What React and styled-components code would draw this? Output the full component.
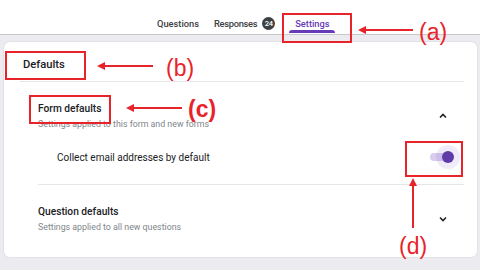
import React from "react";
import styled, { createGlobalStyle } from "styled-components";

const Global = createGlobalStyle`
	html, body {
		margin: 0;
		padding: 0;
		background: #ececf0;
		font-family: Roboto, "Liberation Sans", sans-serif;
	}
`;
const Page = styled("div")`
	position: relative;
	width: 480px;
	height: 270px;
	overflow: hidden;
`;
const TopBar = styled("div")`
	height: 35px;
	background: #fff;
	border-bottom: 1px solid #c8c8cc;
	display: flex;
	align-items: stretch;
	padding-left: 157px;
	box-sizing: border-box;
`;
const Tab = styled("div")`
	position: relative;
	display: flex;
	align-items: center;
	padding-top: 13px;
	margin-right: ${(p) => p.gap || 0}px;
	font-size: 9.3px;
	font-weight: 500;
	letter-spacing: ${(p) => p.tight || 0}px;
	color: ${(p) => (p.active ? "#673ab7" : "#3c4043")};
	&::after {
		content: "";
		display: ${(p) => (p.active ? "block" : "none")};
		position: absolute;
		left: -6px;
		right: -5px;
		bottom: 1px;
		height: 3px;
		border-radius: 3px 3px 0 0;
		background: #673ab7;
	}
`;
const Badge = styled("span")`
	display: inline-flex;
	align-items: center;
	justify-content: center;
	width: 13px;
	height: 13px;
	border-radius: 50%;
	background: #3c4043;
	color: #fff;
	font-size: 7.5px;
	letter-spacing: -0.3px;
	margin-left: 5px;
`;
const Card = styled("div")`
	margin: 7px 3px 0 4px;
	height: 215px;
	background: #fff;
	border-radius: 6px;
	box-shadow: 0 0 0 1px #e2e2e6;
`;
const CardHead = styled("div")`
	height: 40px;
	display: flex;
	align-items: center;
	margin: 0 13px 0 16px;
	padding: 6px 0 0 3px;
	font-size: 11.2px;
	font-weight: 500;
	color: #202124;
	border-bottom: 1px solid #e6e6e8;
	box-sizing: border-box;
`;
const Section = styled("div")`
	margin: 0 13px 0 34px;
	padding-top: ${(p) => p.top}px;
	border-bottom: ${(p) => (p.line ? "1px solid #e6e6e8" : "none")};
	padding-bottom: ${(p) => p.bottom || 0}px;
`;
const SectionHead = styled("div")`
	display: flex;
	align-items: center;
	justify-content: space-between;
	padding-right: 17px;
`;
const Title = styled("div")`
	font-size: 10.2px;
	line-height: 14px;
	font-weight: 500;
	color: #202124;
`;
const Sub = styled("div")`
	font-size: 8.8px;
	line-height: 12px;
	margin-top: 2px;
	color: #80868b;
`;
const Row = styled("div")`
	height: 36px;
	margin-top: 9px;
	display: flex;
	align-items: center;
	justify-content: space-between;
	padding-left: 19px;
	padding-right: 13px;
	font-size: 10px;
	color: #202124;
`;
const Switch = styled("div")`
	position: relative;
	width: 21px;
	height: 8px;
	border-radius: 4px;
	background: #d9cdef;
	&::before {
		content: "";
		position: absolute;
		right: -9px;
		top: -8px;
		width: 24px;
		height: 24px;
		border-radius: 50%;
		background: rgba(103, 58, 183, 0.1);
	}
	&::after {
		content: "";
		position: absolute;
		right: -3px;
		top: -2px;
		width: 12px;
		height: 12px;
		border-radius: 50%;
		background: #5f3ba8;
	}
`;
const Mark = styled("div")`
	position: absolute;
	border: 2px solid #e8232a;
	box-sizing: border-box;
`;
const Label = styled("div")`
	position: absolute;
	font-family: "Liberation Sans", Arial, sans-serif;
	font-size: 23px;
	line-height: 24px;
	font-weight: ${(p) => (p.bold ? 700 : 400)};
	color: #e8232a;
`;
const Arrow = styled("svg")`
	position: absolute;
	overflow: visible;
`;

function Chevron({ up }) {
	return (
		<svg width="8" height="6" viewBox="0 0 8 6">
			<path
				d={up ? "M1 4.5 L4 1.5 L7 4.5" : "M1 1.5 L4 4.5 L7 1.5"}
				fill="none"
				stroke="#202124"
				strokeWidth="1.6"
			/>
		</svg>
	);
}

function HArrow({ x1, x2, y }) {
	return (
		<Arrow style={{ left: x1, top: y - 5 }} width={x2 - x1} height="10">
			<line x1="4" y1="5" x2={x2 - x1} y2="5" stroke="#e8232a" strokeWidth="2" />
			<path d="M0 5 L8 1 L8 9 Z" fill="#e8232a" />
		</Arrow>
	);
}

export default function App() {
	return (
		<Page>
			<Global />
			<TopBar>
				<Tab gap={15}>Questions</Tab>
				<Tab gap={20} tight={-0.3}>
					Responses<Badge>24</Badge>
				</Tab>
				<Tab active>Settings</Tab>
			</TopBar>
			<Card>
				<CardHead>Defaults</CardHead>
				<Section top={20} bottom={9} line>
					<SectionHead>
						<div>
							<Title>Form defaults</Title>
							<Sub>Settings applied to this form and new forms</Sub>
						</div>
						<Chevron up />
					</SectionHead>
					<Row>
						Collect email addresses by default
						<Switch />
					</Row>
				</Section>
				<Section top={20}>
					<SectionHead>
						<div>
							<Title>Question defaults</Title>
							<Sub>Settings applied to all new questions</Sub>
						</div>
						<Chevron />
					</SectionHead>
				</Section>
			</Card>

			<Mark style={{ left: 282, top: 13, width: 70, height: 30 }} />
			<HArrow x1={358} x2={413} y={30} />
			<Label style={{ left: 419, top: 20 }}>(a)</Label>

			<Mark style={{ left: 5, top: 51, width: 81, height: 29 }} />
			<HArrow x1={97} x2={153} y={66} />
			<Label style={{ left: 166, top: 56 }}>(b)</Label>

			<Mark style={{ left: 29, top: 95, width: 82, height: 29 }} />
			<HArrow x1={126} x2={182} y={108} />
			<Label bold style={{ left: 188, top: 97 }}>(c)</Label>

			<Mark style={{ left: 405, top: 141, width: 58, height: 36 }} />
			<Arrow style={{ left: 408, top: 178 }} width="10" height="50">
				<line x1="5" y1="4" x2="5" y2="50" stroke="#e8232a" strokeWidth="2" />
				<path d="M5 0 L1 8 L9 8 Z" fill="#e8232a" />
			</Arrow>
			<Label style={{ left: 399, top: 234 }}>(d)</Label>
		</Page>
	);
}
